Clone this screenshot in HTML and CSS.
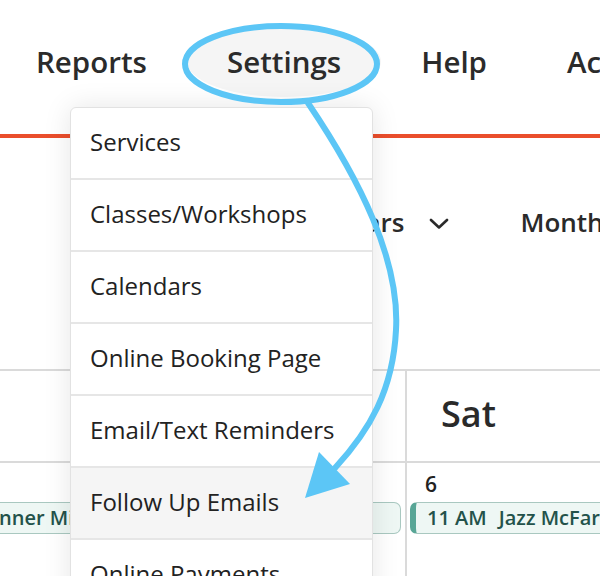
FILE: index.html
```html
<!DOCTYPE html>
<html lang="en">
<head>
<meta charset="utf-8">
<title>Settings menu</title>
<link rel="stylesheet" href="styles.css">
</head>
<body>
  <header class="topnav">
    <a class="nav-item">Reports</a>
    <a class="nav-item active">Settings</a>
    <a class="nav-item">Help</a>
    <a class="nav-item">Account</a>
  </header>

  <div class="toolbar">
    <div class="cal-select">
      <span>Calendars</span>
      <svg class="chevron" width="20" height="11" viewBox="0 0 20 11"><path d="M2 2 L10 9.5 L18 2" fill="none" stroke="#2a2a2a" stroke-width="2.6" stroke-linecap="round" stroke-linejoin="round"/></svg>
    </div>
    <div class="view">Month</div>
  </div>

  <div class="calendar">
    <div class="cal-head c1">Thu</div>
    <div class="cal-head c2">Fri</div>
    <div class="cal-head c3">Sat</div>
    <div class="cal-cell c1"><div class="date">4</div></div>
    <div class="cal-cell c2"><div class="date">5</div></div>
    <div class="cal-cell c3">
      <div class="date">6</div>
      <div class="chip"><span>11 AM</span><span>Jazz McFarland</span></div>
    </div>
    <div class="chip span"><span>6:30 PM</span><span>Beginner Mixology</span></div>
  </div>

  <ul class="dropdown">
    <li>Services</li>
    <li>Classes/Workshops</li>
    <li>Calendars</li>
    <li>Online Booking Page</li>
    <li>Email/Text Reminders</li>
    <li class="hover">Follow Up Emails</li>
    <li>Online Payments</li>
    <li>Forms</li>
  </ul>

  <svg class="annotation" width="600" height="576" viewBox="0 0 600 576">
    <ellipse cx="281" cy="64" rx="96" ry="38" fill="none" stroke="#5cc6f6" stroke-width="6"/>
    <path d="M308 103 C 360 180 400 260 396 330 C 393 390 370 430 335 468" fill="none" stroke="#5cc6f6" stroke-width="6" stroke-linecap="round"/>
    <polygon points="305,498 319,452 350,484" fill="#5cc6f6"/>
  </svg>
</body>
</html>
```

FILE: styles.css
```css
* {
  box-sizing: border-box;
  margin: 0;
  padding: 0;
}

html,
body {
  width: 600px;
  height: 576px;
  overflow: hidden;
  background: #fff;
}

body {
  position: relative;
  font-family: "Open Sans", "Liberation Sans", sans-serif;
  color: #2a2a2a;
}

.topnav {
  display: flex;
  align-items: center;
  gap: 80px;
  height: 138px;
  padding: 0 0 11px 36px;
  border-bottom: 4px solid #ea4e2c;
  white-space: nowrap;
}

.nav-item {
  font-size: 29.5px;
  font-weight: 600;
  color: #2b2b2b;
}

.nav-item.active {
  position: relative;
  z-index: 0;
}

.nav-item.active::before {
  content: "";
  position: absolute;
  left: -40px;
  right: -40px;
  top: -15px;
  bottom: -15px;
  border-radius: 50%;
  background: #f5f5f5;
  z-index: -1;
}

.toolbar {
  display: flex;
  align-items: flex-start;
  height: 231px;
  padding: 66px 0 0 279px;
  white-space: nowrap;
  font-size: 26px;
  font-weight: 600;
  color: #2a2a2a;
}

.cal-select {
  display: flex;
  align-items: center;
  gap: 25px;
}

.chevron {
  display: block;
  margin-top: 2px;
}

.view {
  margin-left: 71px;
}

.calendar {
  display: grid;
  grid-template-columns: 356px 200px 1fr;
  grid-template-rows: 92px 120px;
  margin-left: -151px;
  border-top: 2px solid #dadada;
}

.cal-head,
.cal-cell {
  border-left: 2px solid #dadada;
}

.cal-head {
  display: flex;
  align-items: center;
  padding: 0 0 6px 34px;
  border-bottom: 2px solid #dadada;
  font-size: 36px;
  font-weight: 600;
  color: #2a2a2a;
}

.c1 { grid-column: 1; }
.c2 { grid-column: 2; }
.c3 { grid-column: 3; }

.cal-cell {
  grid-row: 2;
  padding: 7px 3px 0;
}

.date {
  padding-left: 15px;
  font-size: 21px;
  font-weight: 600;
  color: #222;
}

.chip {
  display: flex;
  gap: 12px;
  height: 32px;
  margin-top: 4px;
  padding-left: 11px;
  border: 1px solid #a9c8c0;
  border-left: 6px solid #58a696;
  border-radius: 7px;
  background: #eef7f4;
  color: #24524a;
  font-size: 20px;
  font-weight: 600;
  line-height: 30px;
  white-space: nowrap;
  overflow: hidden;
}

.chip.span {
  grid-column: 1 / 3;
  grid-row: 2;
  align-self: start;
  margin: 39px 4px 0 4px;
}

.dropdown {
  position: absolute;
  left: 70px;
  top: 107px;
  width: 303px;
  list-style: none;
  background: #fff;
  border: 1px solid #e2e2e2;
  border-radius: 6px;
  box-shadow: 0 0 28px rgba(0, 0, 0, 0.1);
}

.dropdown li {
  display: flex;
  align-items: center;
  height: 72px;
  padding: 0 0 3px 19px;
  border-bottom: 2px solid #e6e6e6;
  font-size: 24px;
  color: #222;
  white-space: nowrap;
}

.dropdown li.hover {
  background: #f5f5f5;
}

.annotation {
  position: absolute;
  top: 0;
  left: 0;
  pointer-events: none;
}
```
